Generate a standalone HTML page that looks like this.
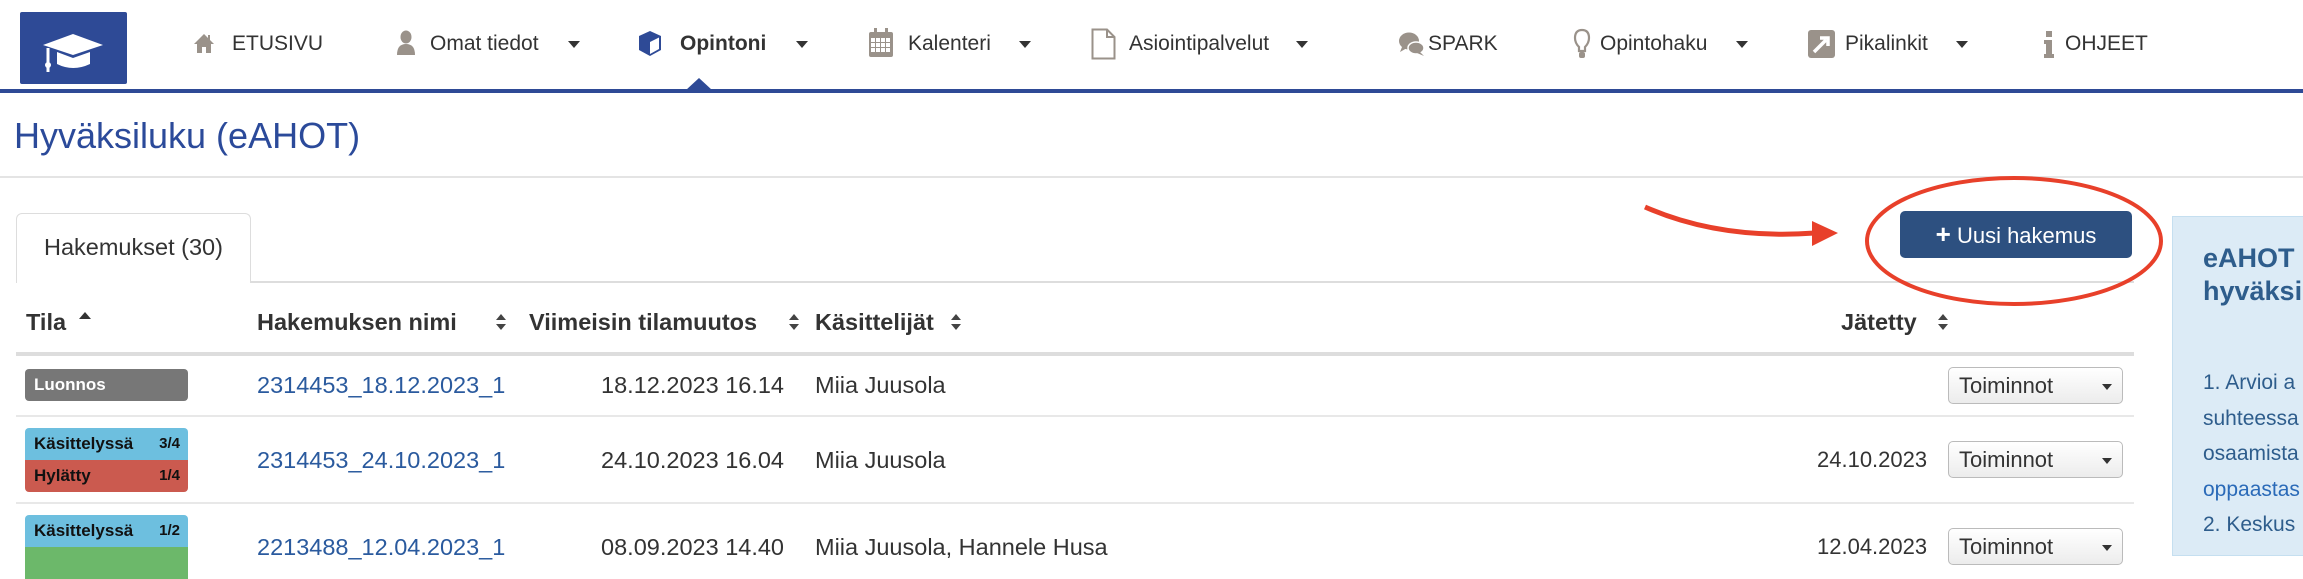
<!DOCTYPE html>
<html><head><meta charset="utf-8">
<style>
*{margin:0;padding:0;box-sizing:border-box}
body{width:2303px;height:550px;overflow:hidden;background:#fff;font-family:"Liberation Sans",Arial,sans-serif;color:#333;position:relative}
.a{position:absolute;white-space:nowrap}
.nav{font-size:21px;line-height:30px;top:29px;color:#333}
.car{position:absolute;width:0;height:0;border-left:6px solid transparent;border-right:6px solid transparent;border-top:7px solid #333;top:41px}
.th{font-size:23.5px;font-weight:bold;line-height:30px;top:307px;color:#333}
.sort{position:absolute;width:12px;height:18px}
.td{font-size:23.5px;line-height:30px}
.lnk{color:#2a5a9e}
.badge{position:absolute;left:25px;width:163px;font-size:17px;font-weight:bold;color:#111;padding-left:9px;line-height:32px}
.badge span{position:absolute;right:8px;font-size:15px}
.tb{position:absolute;left:1948px;width:175px;height:37px;border:1px solid #bbb;border-radius:5px;background:linear-gradient(#fff,#ececec);font-size:22px;line-height:35px;padding-left:10px;color:#333}
.tb:after{content:"";position:absolute;right:10px;top:16px;border-left:5px solid transparent;border-right:5px solid transparent;border-top:6px solid #333}
.rl{position:absolute;left:16px;width:2118px;height:2px;background:#e8e8e8}
</style></head><body>

<div class="a" style="left:20px;top:12px;width:107px;height:72px;background:#2e4a96;border-radius:2px">
<svg width="107" height="72" viewBox="0 0 107 72">
<polygon points="53,22 83,33 53,43 23,33" fill="#fff"/>
<path d="M37,40 L37,52 Q53,60 70,52 L70,40 L53,46 Z" fill="#fff"/>
<path d="M28,36 L28,60" stroke="#fff" stroke-width="3"/>
<circle cx="28" cy="53" r="3" fill="#fff"/>
</svg></div>

<svg class="a" style="left:193px;top:32px" width="22" height="22" viewBox="0 0 22 22"><path d="M11,2 L1,12 L4,12 L4,21 L9,21 L9,15 L13,15 L13,21 L18,21 L18,12 L21,12 L17,8 L17,3 L15,3 L15,6 Z" fill="#9a928a"/></svg>
<div class="a nav" style="left:232px">ETUSIVU</div>

<svg class="a" style="left:396px;top:30px" width="20" height="26" viewBox="0 0 20 26"><ellipse cx="10" cy="7" rx="5.5" ry="6.5" fill="#9a928a"/><path d="M1,25 Q1,14 10,14 Q19,14 19,25 Z" fill="#9a928a"/></svg>
<div class="a nav" style="left:430px">Omat tiedot</div>
<div class="car" style="left:568px"></div>

<svg class="a" style="left:638px;top:30px" width="24" height="27" viewBox="0 0 24 27"><path d="M12,1 L23,6 L23,20 L12,26 L1,20 L1,6 Z" fill="#2e4a96"/><path d="M12,12 L21,7.5 L21,19 L12,24 Z" fill="#fff"/></svg>
<div class="a nav" style="left:680px;font-weight:bold">Opintoni</div>
<div class="car" style="left:796px"></div>
<div class="a" style="left:686px;top:78px;width:0;height:0;border-left:13px solid transparent;border-right:13px solid transparent;border-bottom:12px solid #2e4a96"></div>

<svg class="a" style="left:868px;top:28px" width="26" height="30" viewBox="0 0 26 30"><rect x="1" y="4" width="24" height="25" rx="2" fill="#9a928a"/><g fill="#fff"><rect x="3" y="10" width="4" height="4"/><rect x="8" y="10" width="4" height="4"/><rect x="13" y="10" width="4" height="4"/><rect x="18" y="10" width="4" height="4"/><rect x="3" y="15" width="4" height="4"/><rect x="8" y="15" width="4" height="4"/><rect x="13" y="15" width="4" height="4"/><rect x="18" y="15" width="4" height="4"/><rect x="3" y="20" width="4" height="4"/><rect x="8" y="20" width="4" height="4"/><rect x="13" y="20" width="4" height="4"/><rect x="18" y="20" width="4" height="4"/></g><rect x="6" y="0" width="3" height="7" fill="#9a928a"/><rect x="17" y="0" width="3" height="7" fill="#9a928a"/></svg>
<div class="a nav" style="left:908px">Kalenteri</div>
<div class="car" style="left:1019px"></div>

<svg class="a" style="left:1091px;top:28px" width="25" height="32" viewBox="0 0 25 32"><path d="M1.5,1.5 L16,1.5 L23.5,9 L23.5,30.5 L1.5,30.5 Z M16,1.5 L16,9 L23.5,9" fill="none" stroke="#9a928a" stroke-width="2"/></svg>
<div class="a nav" style="left:1129px">Asiointipalvelut</div>
<div class="car" style="left:1296px"></div>

<svg class="a" style="left:1398px;top:31px" width="28" height="26" viewBox="0 0 28 26"><ellipse cx="11" cy="10" rx="10" ry="8.5" fill="#9a928a"/><path d="M4,16 L2,21 L9,17 Z" fill="#9a928a"/><ellipse cx="18" cy="17" rx="8" ry="6" fill="#9a928a" stroke="#fff" stroke-width="1.5"/><path d="M22,21 L26,25 L19,22 Z" fill="#9a928a"/></svg>
<div class="a nav" style="left:1428px">SPARK</div>

<svg class="a" style="left:1573px;top:28px" width="18" height="32" viewBox="0 0 18 32"><path d="M9,2 Q16,2 16,10 Q16,15 12,19 L12,23 L6,23 L6,19 Q2,15 2,10 Q2,2 9,2 Z" fill="none" stroke="#9a928a" stroke-width="2.2"/><rect x="6" y="24" width="6" height="6" rx="2" fill="#9a928a"/></svg>
<div class="a nav" style="left:1600px">Opintohaku</div>
<div class="car" style="left:1736px"></div>

<svg class="a" style="left:1808px;top:30px" width="27" height="28" viewBox="0 0 27 28"><rect x="0" y="0" width="27" height="28" rx="3" fill="#9a928a"/><path d="M6,22 L18,10 M12,8 L20,8 L20,16" stroke="#fff" stroke-width="3.5" fill="none"/></svg>
<div class="a nav" style="left:1845px">Pikalinkit</div>
<div class="car" style="left:1956px"></div>

<svg class="a" style="left:2043px;top:31px" width="12" height="27" viewBox="0 0 12 27"><rect x="3" y="0" width="6" height="6" fill="#9a928a"/><path d="M1,9 L9,9 L9,23 L11,23 L11,27 L1,27 L1,23 L3,23 L3,13 L1,13 Z" fill="#9a928a"/></svg>
<div class="a nav" style="left:2065px">OHJEET</div>

<div class="a" style="left:0;top:89px;width:2303px;height:4px;background:#2e4a96"></div>

<div class="a" style="left:14px;top:114px;font-size:36px;line-height:44px;color:#2b4a9a">Hyväksiluku (eAHOT)</div>
<div class="a" style="left:0;top:176px;width:2303px;height:2px;background:#e4e4e4"></div>

<div class="a" style="left:16px;top:213px;width:235px;height:70px;border:1px solid #ddd;border-bottom:none;border-radius:6px 6px 0 0;background:#fff"></div>
<div class="a" style="left:251px;top:281px;width:1883px;height:2px;background:#ddd"></div>
<div class="a" style="left:44px;top:232px;font-size:23.5px;line-height:30px;color:#333">Hakemukset (30)</div>

<svg class="a" style="left:1620px;top:150px" width="560" height="170" viewBox="1620 150 560 170">
<path d="M1645,207 Q1720,240 1815,233" fill="none" stroke="#e8402a" stroke-width="5"/>
<polygon points="1812,221 1838,233 1812,246" fill="#e8402a"/>
<ellipse cx="2014" cy="241" rx="147" ry="63" fill="none" stroke="#e8402a" stroke-width="4"/>
</svg>

<div class="a" style="left:1900px;top:211px;width:232px;height:47px;background:#2d5080;border-radius:5px;color:#fff;font-size:22px;line-height:47px;text-align:center"><b style="font-size:26px">+</b> Uusi hakemus</div>

<div class="a" style="left:2172px;top:216px;width:140px;height:340px;background:#dcebf6;border:1px solid #c5dff0"></div>
<div class="a" style="left:2203px;top:242px;font-size:27px;font-weight:bold;line-height:33px;color:#2e5d8c">eAHOT<br>hyväksi</div>
<div class="a" style="left:2203px;top:365px;font-size:21px;line-height:35.5px;color:#2e5d8c">1. Arvioi a<br>suhteessa<br>osaamista<br><span style="color:#2a6ab8">oppaastas</span><br>2. Keskus</div>

<div class="a th" style="left:26px">Tila</div>
<div class="a" style="left:79px;top:312px;width:0;height:0;border-left:6px solid transparent;border-right:6px solid transparent;border-bottom:7px solid #333"></div>
<div class="a th" style="left:257px">Hakemuksen nimi</div>
<div class="a th" style="left:529px">Viimeisin tilamuutos</div>
<div class="a th" style="left:815px">Käsittelijät</div>
<div class="a th" style="left:1841px">Jätetty</div>
<svg class="sort" style="left:495px;top:313px" viewBox="0 0 12 18"><path d="M1,7 L6,1 L11,7 Z M1,11 L6,17 L11,11 Z" fill="#444"/></svg>
<svg class="sort" style="left:788px;top:313px" viewBox="0 0 12 18"><path d="M1,7 L6,1 L11,7 Z M1,11 L6,17 L11,11 Z" fill="#444"/></svg>
<svg class="sort" style="left:950px;top:313px" viewBox="0 0 12 18"><path d="M1,7 L6,1 L11,7 Z M1,11 L6,17 L11,11 Z" fill="#444"/></svg>
<svg class="sort" style="left:1937px;top:313px" viewBox="0 0 12 18"><path d="M1,7 L6,1 L11,7 Z M1,11 L6,17 L11,11 Z" fill="#444"/></svg>
<div class="a" style="left:16px;top:352px;width:2118px;height:4px;background:#ddd"></div>

<div class="badge" style="top:369px;height:32px;background:#777;color:#fff;border-radius:4px">Luonnos</div>
<div class="a td lnk" style="left:257px;top:370px">2314453_18.12.2023_1</div>
<div class="a td" style="left:584px;width:200px;text-align:right;top:370px">18.12.2023 16.14</div>
<div class="a td" style="left:815px;top:370px">Miia Juusola</div>
<div class="tb" style="top:367px">Toiminnot</div>
<div class="rl" style="top:415px"></div>

<div class="badge" style="top:428px;height:32px;background:#6dbfdf;border-radius:4px 4px 0 0">Käsittelyssä<span>3/4</span></div>
<div class="badge" style="top:460px;height:32px;background:#cb5a4f;border-radius:0 0 4px 4px">Hylätty<span>1/4</span></div>
<div class="a td lnk" style="left:257px;top:445px">2314453_24.10.2023_1</div>
<div class="a td" style="left:584px;width:200px;text-align:right;top:445px">24.10.2023 16.04</div>
<div class="a td" style="left:815px;top:445px">Miia Juusola</div>
<div class="a td" style="left:1817px;top:445px;font-size:22px">24.10.2023</div>
<div class="tb" style="top:441px">Toiminnot</div>
<div class="rl" style="top:502px"></div>

<div class="badge" style="top:515px;height:32px;background:#6dbfdf;border-radius:4px 4px 0 0">Käsittelyssä<span>1/2</span></div>
<div class="badge" style="top:547px;height:32px;background:#6cb86a"></div>
<div class="a td lnk" style="left:257px;top:532px">2213488_12.04.2023_1</div>
<div class="a td" style="left:584px;width:200px;text-align:right;top:532px">08.09.2023 14.40</div>
<div class="a td" style="left:815px;top:532px">Miia Juusola, Hannele Husa</div>
<div class="a td" style="left:1817px;top:532px;font-size:22px">12.04.2023</div>
<div class="tb" style="top:528px">Toiminnot</div>

</body></html>
